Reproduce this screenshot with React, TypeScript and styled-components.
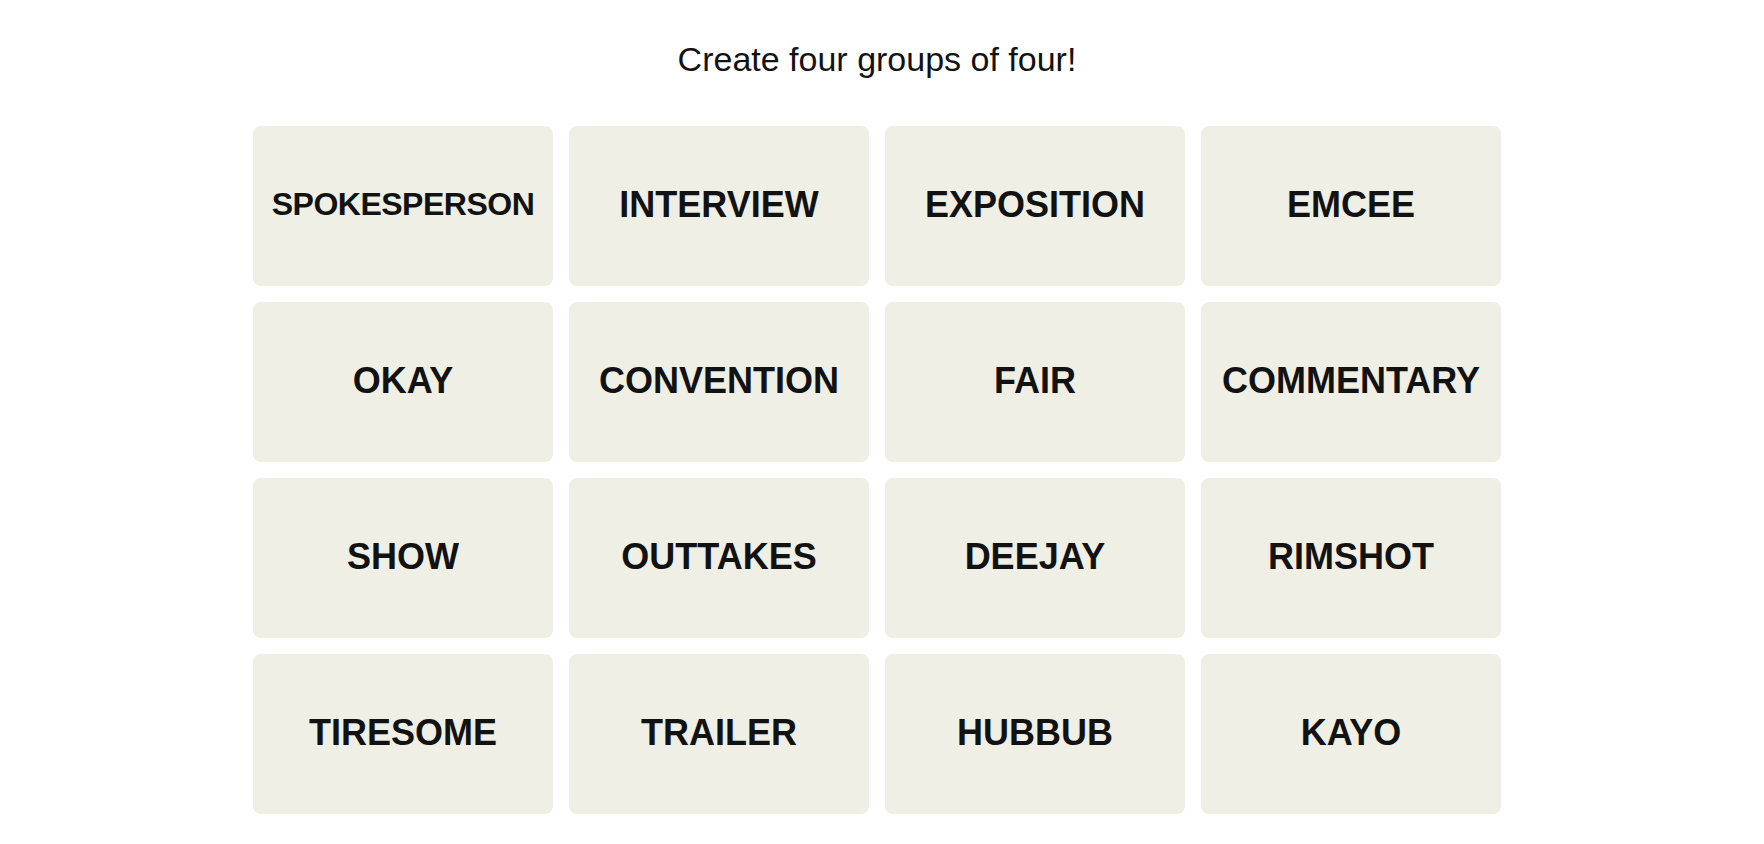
import React from "react";
import styled, { createGlobalStyle } from "styled-components";

const GlobalStyle = createGlobalStyle`
  html, body {
    margin: 0;
    padding: 0;
    background: #ffffff;
  }
  body {
    font-family: "Liberation Sans", Arial, sans-serif;
    color: #121212;
  }
`;

const Page = styled.main`
  display: flex;
  flex-direction: column;
  align-items: center;
  padding: 39px 10px 0 0;
`;

const Title = styled.p`
  margin: 0;
  font-family: "Liberation Sans", Arial, sans-serif;
  font-size: 34px;
  line-height: 40px;
  font-weight: 400;
  color: #121212;
`;

const Board = styled.section`
  margin-top: 47px;
  display: grid;
  grid-template-columns: repeat(4, 300px);
  grid-auto-rows: 160px;
  gap: 16px;
`;

const Tile = styled.button<{ $size: number; $spacing: number }>`
  display: flex;
  align-items: center;
  justify-content: center;
  border: none;
  border-radius: 8px;
  background: #efefe6;
  color: #121212;
  padding: 0 0 3px;
  font-family: "Liberation Sans", Arial, sans-serif;
  font-weight: 700;
  font-size: ${(p) => p.$size}px;
  letter-spacing: ${(p) => p.$spacing}px;
  text-transform: uppercase;
  cursor: pointer;
  white-space: nowrap;
`;

const words = [
  "SPOKESPERSON",
  "INTERVIEW",
  "EXPOSITION",
  "EMCEE",
  "OKAY",
  "CONVENTION",
  "FAIR",
  "COMMENTARY",
  "SHOW",
  "OUTTAKES",
  "DEEJAY",
  "RIMSHOT",
  "TIRESOME",
  "TRAILER",
  "HUBBUB",
  "KAYO",
];

export default function App() {
  return (
    <>
      <GlobalStyle />
      <Page>
        <Title>Create four groups of four!</Title>
        <Board>
          {words.map((w) => {
            const long = w.length > 11;
            return (
              <Tile key={w} $size={long ? 32 : 36} $spacing={long ? -0.5 : 0}>
                {w}
              </Tile>
            );
          })}
        </Board>
      </Page>
    </>
  );
}
